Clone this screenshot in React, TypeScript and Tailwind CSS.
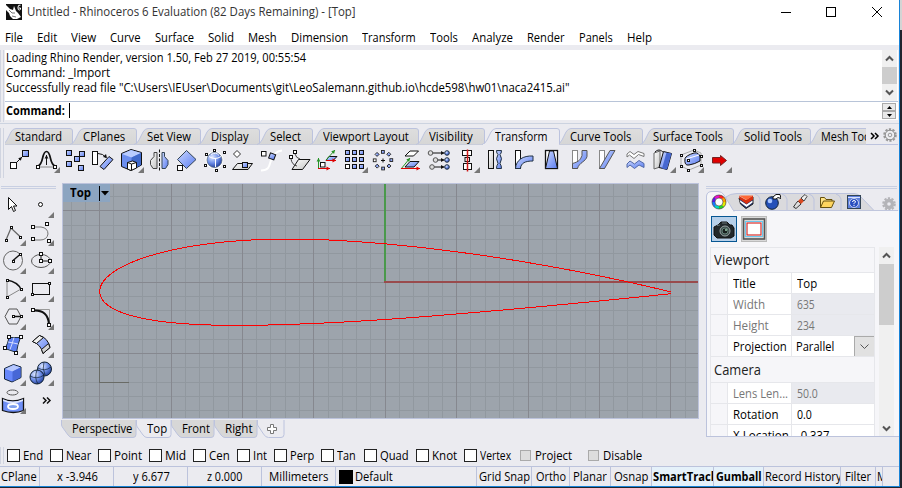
import React, { useLayoutEffect, useRef, useState } from "react";

/* Text set to a known advance width. */
function T({ w, children, className = "" }: { w: number; children: React.ReactNode; className?: string }) {
  const ref = useRef<HTMLSpanElement>(null);
  const [s, setS] = useState(1);
  useLayoutEffect(() => {
    if (ref.current) setS(w / ref.current.offsetWidth);
  }, [w]);
  return (
    <span className={`block shrink-0 whitespace-pre ${className}`} style={{ width: w }}>
      <span ref={ref} className="inline-block origin-left align-top" style={{ transform: `scaleX(${s})` }}>
        {children}
      </span>
    </span>
  );
}

const K = "#111";
const W = "#fff";
const B = "url(#blue)";
const G = "url(#metal)";

function Sq({ x, y, s = 5, f = B }: { x: number; y: number; s?: number; f?: string }) {
  return <rect x={x + 0.5} y={y + 0.5} width={s} height={s} fill={f} stroke={K} />;
}
function Dot({ x, y, s = 3 }: { x: number; y: number; s?: number }) {
  return <rect x={Math.round(x - s / 2) + 0.5} y={Math.round(y - s / 2) + 0.5} width={s - 1} height={s - 1} fill={W} stroke={K} />;
}
const Corner = ({ x = 21, y = 20 }: { x?: number; y?: number }) => (
  <path d={`M${x + 6} ${y}v6h-6z`} fill="#777" />
);
function Arrow({ x1, y1, x2, y2, c = K }: { x1: number; y1: number; x2: number; y2: number; c?: string }) {
  const a = Math.atan2(y2 - y1, x2 - x1);
  const p = (d: number) => `${x2 - 4 * Math.cos(a + d)},${y2 - 4 * Math.sin(a + d)}`;
  return (
    <g>
      <path d={`M${x1} ${y1}L${x2} ${y2}`} stroke={c} fill="none" />
      <polygon points={`${x2},${y2} ${p(0.5)} ${p(-0.5)}`} fill={c} />
    </g>
  );
}

function Defs() {
  return (
    <svg className="absolute h-0 w-0">
      <defs>
        <linearGradient id="blue" x1="0" y1="0" x2="1" y2="1">
          <stop offset="0" stopColor="#cbd8ff" /><stop offset="1" stopColor="#5a7cf0" />
        </linearGradient>
        <linearGradient id="metal" x1="0" y1="0" x2="1" y2="1">
          <stop offset="0" stopColor="#fff" /><stop offset="1" stopColor="#c4c4c4" />
        </linearGradient>
        <radialGradient id="ball" cx=".35" cy=".3" r=".8">
          <stop offset="0" stopColor="#e0e9ff" /><stop offset=".5" stopColor="#6f8fe8" /><stop offset="1" stopColor="#14308c" />
        </radialGradient>
        <linearGradient id="tab" x1="0" y1="0" x2="0" y2="1">
          <stop offset="0" stopColor="#dedede" /><stop offset="1" stopColor="#d6d6d6" />
        </linearGradient>
      </defs>
    </svg>
  );
}

const transformIcons: React.ReactNode[] = [
  <><Sq x={5} y={15} s={6} f={W} /><Sq x={17} y={3} s={6} /><Arrow x1={12} y1={15} x2={17} y2={10} /></>,
  <><path d="M5 19C11 17 8.500 4.500 13.500 4.500S16 17 22 19" stroke={K} strokeWidth="1.700" fill="none" /><path d="M7 20h14" stroke="#888" /><Arrow x1={13.5} y1={18} x2={13.5} y2={8} /><Dot x={5} y={20} s={4} /><Dot x={22} y={20} s={4} /><Corner /></>,
  <><Sq x={5} y={3} /><Sq x={18} y={4} /><Sq x={5} y={14} /><Sq x={17} y={18} /><Sq x={13} y={9} /></>,
  <><rect x="3.500" y="4.500" width="5" height="13" fill={W} stroke={K} /><path d="M9 6.500q5 0 8 4" stroke={K} fill="none" /><path d="M18 11l-4-1 3-3z" fill={K} /><path d="M11 19.500L20 9.500l4 3L15 22.500z" fill={B} stroke={K} /></>,
  <><path d="M4.500 6.500L14 2.500l10.500 3V18L14 23.500l-9.500-4z" fill="#6c8ff0" stroke={K} /><path d="M5 7l9-4 10 3-9.500 4.500z" fill="#b9ccff" /><path d="M14.500 10.500L24 6v12l-9.500 5z" fill="#416acb" /><path d="M10.500 15.500l5-1.500 4 1.500v5.500l-5.500 2.500-3.500-1.500z" fill={W} stroke={K} /><path d="M10.500 15.500l4 1.500 5-1.500M14.500 17v6" stroke={K} fill="none" /><Corner /></>,
  <><path d="M12 5.500H9v4l-3.500 4v4L8 21.500h4z" fill={G} stroke="#444" /><path d="M17 5.500h2.500v4l3.500 4v4L20.500 21.500H17z" fill={B} stroke="#345" /><path d="M14.500 2.500v22" stroke={K} strokeDasharray="3 1.500" /></>,
  <><path d="M13.500 3.500l9.500 9-9.500 9-9-9z" fill={B} stroke="#345" /><Sq x={4} y={18} s={5} f={W} /></>,
  <><circle cx="13.500" cy="13" r="9" fill="#fff" /><circle cx="13.500" cy="13" r="7.500" fill="url(#ball)" stroke="#567" strokeWidth=".7" /><path d="M8 9.500q6 4 12 0M14.500 11.500V20M10 7.500q5-3 8 1" stroke="#fff" fill="none" /><Dot x={5} y={7} /><Dot x={13} y={3} /><Dot x={23} y={5} /><Dot x={4} y={18} /><Dot x={15} y={23} /><Dot x={23} y={19} /></>,
  <><path d="M8 3.500l3.500 3.500L8 10.500 4.500 7z" fill={W} stroke="#333" /><path d="M8.500 16.500h15l-4.500 6H3.500z" fill={G} stroke={K} /><Sq x={13} y={15} s={5} /></>,
  <><path d="M4 23.500c10 0 8-7 11-13q3-6 10-7" stroke="#fff" strokeWidth="2" fill="none" /><Sq x={4} y={4} s={4.5} f={W} /><rect x="12.500" y="6.500" width="5.500" height="5.500" transform="rotate(20 15 9)" fill={B} stroke={K} /></>,
  <><path d="M13.500 12.500h11.500L17.500 22.500h-10.500z" fill={G} stroke={K} /><path d="M10 7q1 4 5 5M6 12q1 6 6 7" stroke="#444" fill="none" /><Dot x={9.5} y={5} s={4} /><Dot x={5.500} y={10} s={4} /></>,
  <><Arrow x1={5.500} y1={22} x2={5.500} y2={11} c="#279327" /><Arrow x1={5} y1={21.5} x2={17} y2={21.5} c="#d00" /><Sq x={7} y={15} s={4.500} f={W} /><path d="M16 9.500h8l-4 4h-7z" fill={B} stroke={K} /><Arrow x1={13} y1={13} x2={22} y2={3} c="#279327" /><Arrow x1={13} y1={13.5} x2={23} y2={13.5} c="#d00" /></>,
  <>{[0, 1, 2].map((r) => [0, 1, 2].map((c) => <Sq key={`${r}${c}`} x={4 + c * 7} y={3 + r * 7} s={4} f={r === 2 && c === 0 ? W : B} />))}<Corner /></>,
  <>{[0, 1, 2, 3, 4, 5, 6, 7].map((i) => <rect key={i} x="12.500" y="3.500" width="2.800" height="2.800" transform={`rotate(${i * 45} 14 13.200)`} fill={i === 6 ? W : B} stroke="#222" strokeWidth=".9" />)}<path d="M12 13.500h4M14 11.500v4" stroke={K} /></>,
  <><path d="M13 4h8.500L16.500 9H8z" fill={W} stroke={K} /><path d="M13 14.500h9L17 20H8z" fill={B} stroke={K} /><Arrow x1={4} y1={22} x2={13} y2={11} c="#279327" /><Arrow x1={4} y1={21.5} x2={23} y2={21.5} c="#d00" /></>,
  <>{[[5.5, 6], [10.5, 13], [7, 20]].map(([x, y]) => <g key={y}><Arrow x1={x} y1={y} x2={19.500} y2={y} /><circle cx={x} cy={y} r="2.300" fill="#ddd" stroke="#555" /><circle cx="22" cy={y} r="2.300" fill="url(#ball)" stroke="#234" /></g>)}</>,
  <><rect x="9.500" y="3.500" width="9" height="5" fill={W} stroke={K} /><rect x="12" y="10.500" width="4.500" height="4" fill={W} stroke={K} /><rect x="10.500" y="16.500" width="8" height="6" fill={W} stroke={K} /><path d="M14.500 2.500v22" stroke="#d01717" strokeWidth="1.500" /><Corner /></>,
  <><rect x="7.500" y="3.500" width="5" height="18" fill={G} stroke={K} /><path d="M15.500 3.500h5q0 3-1.500 4 3 4 0 9 1.500 2 1.500 5h-5q0-3 1.500-5-3-5 0-9-1.500-1-1.500-4z" fill={B} stroke="#234" /></>,
  <><rect x="6.500" y="3.500" width="5" height="18" fill={W} stroke={K} /><path d="M6.500 21.500C7 13 14 8.500 24 9v5c-8 0-12 2-12.500 7.500z" fill={B} stroke="#234" /></>,
  <><rect x="8.500" y="3.500" width="12" height="18" fill={W} stroke={K} strokeWidth="1.300" /><path d="M12.500 4h4l4 17.500h-12z" fill={B} stroke={K} /></>,
  <><rect x="7.500" y="3.500" width="5" height="18" fill={W} stroke="#888" /><path d="M7.500 21.500v-5c7-2 8-4 9.500-8V3.500h5v6c-1 5-8 6-9.500 12z" fill={B} stroke="#555" /></>,
  <><rect x="6.500" y="3.500" width="5" height="18" fill={W} stroke="#888" /><path d="M6.500 21.500L17 3.500h5l-10.500 18z" fill={B} stroke="#555" /></>,
  <><path d="M6 7l3-2.500 4 3L17 4.500l6 2v3l-5.500-2-4.500 4-4.500-3.500L6 10z" fill={W} stroke="#777" /><path d="M6 17l3-3 4.500 3 4.500-3.500 5 3v4l-5-2.500-4.500 3.500-4.500-3.500L6 20.500z" fill={B} stroke="#5068a8" /></>,
  <><path d="M5 6l6-2v16l-6 2z" fill={G} stroke="#666" /><path d="M6 5c4-4 7-1 9 1" stroke={K} fill="none" /><path d="M14.500 4.500l8 2-4.500 16-8-2z" fill={B} stroke={K} /><path d="M17.500 5.500l-4.500 16 5 1 4.500-16z" fill="#4768d0" /><Corner /></>,
  <><path d="M4 8l13-5 7 3v12l-12 5-8-4z" stroke="#aaa" fill="none" /><path d="M8 11.500Q9 8.500 17 6q5-1 6 4v4q-5 3-11 4-5 1-4-6.500z" fill={B} stroke={K} /><path d="M9 12l13-4" stroke="#fff" /><Dot x={4} y={8} /><Dot x={17.5} y={3} /><Dot x={24} y={9} /><Dot x={11} y={13} /><Dot x={4} y={19} /><Dot x={11} y={23} /><Dot x={24} y={18} /><Corner /></>,
  <><path d="M7.500 10.500h8V8.500l6 5-6 5v-2.500h-8z" fill="#e00000" stroke="#722" /><Corner /></>,
];

const paletteIcons: React.ReactNode[] = [
  <path d="M8.500 7.500v12l3-3 2 5 2-1-2-4.500h3.500z" fill={W} stroke={K} />,
  <><circle cx="12.500" cy="14.500" r="2" fill={W} stroke={K} /><Corner x={20} y={22} /></>,
  <><path d="M6 22L11 10l9.500 9" stroke="#666" fill="none" strokeWidth="1.300" /><Dot x={6} y={22.500} /><Dot x={11} y={9} /><Dot x={20.500} y={19.500} /><Corner x={20} y={22} /></>,
  <><path d="M5 9h8q7 1 7 7-1 6-8 6H5" stroke="#777" fill="none" /><Dot x={5} y={9} s={4} /><Dot x={19} y={6} s={4} /><Dot x={5} y={21} s={4} /><Dot x={21} y={23} s={4} /><Corner x={20} y={22} /></>,
  <><circle cx="13" cy="14.500" r="9.500" stroke="#666" fill="none" /><path d="M13 14.500l7-6" stroke={K} strokeWidth="1.400" /><Dot x={13} y={15} /><Dot x={20} y={8} /><Corner x={20} y={22} /></>,
  <><ellipse cx="13" cy="15" rx="9.500" ry="6.500" stroke="#555" fill="none" /><path d="M13 8v7h9" stroke={K} fill="none" /><Dot x={13} y={15} s={4} /><Dot x={13} y={8} s={4} /><Dot x={22} y={15} s={4} /><Corner x={20} y={22} /></>,
  <><path d="M7 6q11 2 14 9.500" stroke={K} strokeWidth="1.500" fill="none" /><path d="M7 6v17l14-8" stroke="#888" fill="none" /><Dot x={7} y={6.500} /><Dot x={21} y={15} /><Dot x={7} y={23.500} /><Corner x={20} y={22} /></>,
  <><rect x="4.500" y="9.500" width="17" height="11" fill="none" stroke={K} /><Dot x={4.500} y={20.500} /><Dot x={21.500} y={9.500} /><Corner x={20} y={22} /></>,
  <><path d="M5 14.500l4-7.500h8l4 7.500-4 7.500H9z" stroke="#555" fill="none" /><path d="M13 14.500h8" stroke={K} strokeWidth="1.500" /><Dot x={13} y={14.500} /><Dot x={21} y={14.500} /><Corner x={20} y={22} /></>,
  <><path d="M6 7.500h15.500V23" stroke="#999" fill="none" /><path d="M5 8.500q15-1 16 14" stroke={K} strokeWidth="2" fill="none" /><Dot x={5} y={8} s={4} /><Dot x={21} y={23} s={4} /><Corner x={20} y={22} /></>,
  <><path d="M9 7.500h11.500q-3 7-4 15L5 18.500q3-5 4-11z" fill="#5d7ff0" stroke="#234" /><path d="M8 12q6 1 10 2M14 7.500q-2 7-4 12" stroke="#d4ddff" fill="none" /><Dot x={9} y={7} s={4} /><Dot x={20.5} y={7} s={4} /><Dot x={5} y={18} s={4} /><Dot x={16} y={23} s={4} /><Corner x={20} y={22} /></>,
  <><path d="M4.500 11.500l7-6Q20 8 22 17.500l-7 6q-2-9-10.500-12z" fill={B} stroke={K} /><path d="M4.500 11.500l7-6 4 2-7 6zM13.500 19.500l7-6 1.500 4-7 6z" fill={G} stroke={K} /><Corner x={20} y={22} /></>,
  <><path d="M4.500 10.500l9-4 7.500 2.500v10.500L12 24l-7.500-3z" fill="#6687fa" stroke="#123" /><path d="M5 11l8.500-4 7 2.500-8 4z" fill="#b6c8ff" /><path d="M12.500 13.500l8-4v10l-8 4z" fill="#4767d6" /><Corner x={20} y={22} /></>,
  <><circle cx="16.500" cy="11" r="7" fill="url(#ball)" stroke="#123" /><circle cx="9" cy="19" r="7" fill="url(#ball)" stroke="#123" /><path d="M2 18q7 4 14-1M9 12q-3 8 1 14M10 10q7 4 13-1M16 4q-2 6 1 13" stroke="#123" strokeWidth=".7" fill="none" /><Corner x={20} y={22} /></>,
  <><ellipse cx="12.500" cy="6.500" rx="5.500" ry="2.500" fill="none" stroke="#555" /><path d="M2.500 12.500q10 5 21 0v12q-10 4-21 0z" fill="#6f8ff6" stroke={K} strokeWidth="1.300" /><path d="M3 13.300q10 4.500 20 0v1.700q-10 4.500-20 0z" fill="#dfe6ff" /><ellipse cx="13" cy="20.500" rx="5" ry="2.500" fill="#80a0ee" stroke="#fff" strokeWidth="1.800" /><Corner x={20} y={22} /></>,
  <path d="M15 11.500l3 3-3 3M19 11.500l3 3-3 3" stroke={K} strokeWidth="1.500" fill="none" />,
];

const menu: [string, number][] = [["File", 18], ["Edit", 20], ["View", 25], ["Curve", 31], ["Surface", 39], ["Solid", 26], ["Mesh", 29], ["Dimension", 57], ["Transform", 54], ["Tools", 28], ["Analyze", 41], ["Render", 38], ["Panels", 34], ["Help", 25]];

/* label, tab width, text width */
const tabs: [string, number, number][] = [["Standard", 68, 47], ["CPlanes", 64, 42], ["Set View", 64, 44], ["Display", 59, 38], ["Select", 53, 31], ["Viewport Layout", 106, 86], ["Visibility", 66, 44], ["Transform", 75, 53], ["Curve Tools", 83, 61], ["Surface Tools", 91, 70], ["Solid Tools", 77, 58], ["Mesh Tools", 80, 58]];

function ToolTab({ label, w, tw, active }: { label: string; w: number; tw: number; active: boolean }) {
  return (
    <div className={`relative h-[17px] shrink-0 pl-[10px] ${active ? "z-10" : ""}`} style={{ width: w }}>
      <svg className="absolute left-0 top-0 overflow-visible" width={w} height="17">
        <path d={`M-3 16.500Q0 16 2 12L6 4Q8 .5 11 .5H${w - 3}Q${w - .5} .5 ${w - .5} 3V16.500`} fill={active ? "#ebebf0" : "url(#tab)"} stroke="#bcc3de" />
        {active && <path d={`M-2 16.500H${w - 1}`} stroke="#ebebf0" />}
      </svg>
      <T w={tw} className="relative leading-[17px]">{label}</T>
    </div>
  );
}

function Chevron({ up = false }: { up?: boolean }) {
  return (
    <svg width="9" height="7" className={up ? "" : "rotate-180"}>
      <path d="M1 5.500l3.500-3.500L8 5.500" fill="none" stroke="#555" strokeWidth="2" />
    </svg>
  );
}

function Gear({ fill }: { fill: string }) {
  const solid = fill === "#b4b4b8";
  return (
    <svg width="14" height="14" viewBox="0 0 14 14">
      <circle cx="7" cy="7" r="5.800" fill="none" stroke={solid ? fill : "#999"} strokeWidth="2" strokeDasharray="2.200 1.444" />
      <circle cx="7" cy="7" r="4.800" fill={fill} stroke={solid ? fill : "#888"} />
      <circle cx="7" cy="7" r="1.800" fill="#ebebf0" stroke={solid ? "none" : "#999"} />
    </svg>
  );
}

function foilPath() {
  const c = 571, x0 = 99.8, y0 = 292.8;
  const at = (t: number, side: number) => {
    const th = 0.75 * (0.2969 * Math.sqrt(t) - 0.126 * t - 0.3516 * t * t + 0.2843 * t ** 3 - 0.1015 * t ** 4);
    const lo = t < 0.4;
    const k = lo ? 0.125 : 0.02 / 0.36;
    const cam = lo ? k * (0.8 * t - t * t) : k * (0.2 + 0.8 * t - t * t);
    const a = Math.atan(k * (0.8 - 2 * t));
    return `${(x0 + c * (t - side * th * Math.sin(a))).toFixed(2)} ${(y0 - c * (cam + side * th * Math.cos(a))).toFixed(2)}`;
  };
  const pts: string[] = [];
  for (let i = 80; i >= 0; i--) pts.push(at((i / 80) ** 2, 1));
  for (let i = 1; i <= 80; i++) pts.push(at((i / 80) ** 2, -1));
  return `M${pts.join("L")}`;
}

function Viewport() {
  const v: [number, boolean][] = [], h: [number, boolean][] = [];
  for (let k = -22; k <= 21; k++) v.push([Math.floor(385.2 + 14.28 * k), k % 5 === 0]);
  for (let k = -6; k <= 9; k++) h.push([Math.floor(282.3 + 14.28 * k), k % 5 === 0]);
  const pick = (major: boolean) =>
    v.filter((l) => l[1] === major).map((l) => `M${l[0] + 0.5} 184V418`).join("") +
    h.filter((l) => l[1] === major).map((l) => `M63 ${l[0] + 0.5}H698`).join("");
  return (
    <div className="relative h-[236px] w-[637px] shrink-0 border border-[#bcc3dc] bg-[#9da4ac]">
      <svg width="635" height="234" viewBox="63 184 635 234" shapeRendering="crispEdges" className="block">
        <path d={pick(false)} stroke="#91989f" />
        <path d={pick(true)} stroke="#86888f" />
        <path d="M99.500 352V382.500H129" stroke="#696b66" fill="none" />
        <path d="M384 282H698" stroke="#994b4d" strokeWidth="2" />
        <path d="M385 184V281" stroke="#4a994b" strokeWidth="2" />
        <path d={foilPath()} stroke="#f00" fill="none" />
      </svg>
      <div className="absolute left-0 top-0 flex h-[18px] w-[47px] items-center bg-[#8ca5c1] pl-[7px] font-bold">
        <T w={21} className="leading-[18px]">Top</T>
        <div className="ml-2 h-[15px] w-px bg-black" />
        <svg width="8" height="5" className="ml-px"><path d="M0 0h8L4 4.500z" fill="#000" /></svg>
      </div>
    </div>
  );
}

const viewTabs: [string, number, number, boolean][] = [["Perspective", 75, 60, false], ["Top", 35, 20, true], ["Front", 43, 28, false], ["Right", 43, 28, false]];

const snaps: [string, number, number][] = [["End", 20, 7], ["Near", 25, 7], ["Point", 28, 7], ["Mid", 21, 7], ["Cen", 21, 7], ["Int", 14, 7], ["Perp", 24, 7], ["Tan", 19, 8], ["Quad", 29, 7], ["Knot", 25, 7], ["Vertex", 31, 9]];

/* label, cell width, left padding, text width, highlighted */
const status: [string, number, number, number, boolean][] = [["CPlane", 40, 1, 36, false], ["x -3.946", 74, 17, 41, false], ["y 6.677", 74, 19, 37, false], ["z 0.000", 74, 19, 35, false], ["Millimeters", 74, 7, 59, false], ["Default", 141, 3, 38, false], ["Grid Snap", 55, 2, 51, false], ["Ortho", 38, 4, 30, false], ["Planar", 41, 3, 34, false], ["Osnap", 41, 3, 34, false], ["SmartTrack", 62, 1, 65, true], ["Gumball", 50, 2, 46, true], ["Record History", 77, 1, 76, false], ["Filter", 35, 4, 26, false], ["Memory", 7, 1, 42, false]];

function PropRow({ k, kw, v, vw, off = false, drop = false }: { k: string; kw: number; v: string; vw: number; off?: boolean; drop?: boolean }) {
  return (
    <div className={`flex h-[21px] shrink-0 border-t border-[#e6e7eb] ${off ? "text-[#777]" : "text-black"}`}>
      <div className="w-[17px] shrink-0 border-r border-[#e6e7eb]" />
      <div className="flex w-[64px] shrink-0 items-center border-r border-[#e6e7eb] bg-white pl-[5px]"><T w={kw}>{k}</T></div>
      <div className={`flex grow items-center ${drop ? "pl-[4px]" : "pl-[5px]"} ${off ? "bg-[#e9eaef]" : "bg-white"}`}>
        <T w={vw}>{v}</T>
        {drop && (
          <div className="ml-auto flex h-[20px] w-[20px] items-center justify-center border-l border-t border-[#aaa] bg-[#e1e1e1]">
            <svg width="9" height="6"><path d="M.5 .5l4 4 4-4" fill="none" stroke="#555" /></svg>
          </div>
        )}
      </div>
    </div>
  );
}

const wheel = ["#ff2020", "#ff9d00", "#e8e800", "#28d428", "#00d8c0", "#1878ff", "#5818e8", "#e810c8"];
const panelIcons: React.ReactNode[] = [
  <g>{wheel.map((c, i) => <path key={c} d="M8 2.500A5.500 5.500 0 0 1 12.200 4.400" transform={`rotate(${i * 45} 8 8)`} stroke={c} strokeWidth="3" fill="none" />)}<circle cx="8" cy="8" r="7" fill="none" stroke="#333" strokeWidth=".6" /><circle cx="8" cy="8" r="4" fill="#fff" stroke="#333" strokeWidth=".6" /></g>,
  <g><path d="M1 4l8 4 6-5v7l-7 4.500L2.500 10z" fill="#20326e" stroke="#222" /><path d="M1.500 6l7 4.500 6-4v2l-6 4.500-6-4.500z" fill="#fff" /><path d="M1 2l7 4 7-4.500v4L8.500 10 1.500 5z" fill="#d83010" /><path d="M1 1.500h14L8.500 6z" fill="#ff6a38" /></g>,
  <g><circle cx="7" cy="9" r="6.300" fill="#2450b8" stroke="#123" /><circle cx="5" cy="7" r="2.300" fill="#a9c6ff" /><path d="M8 3l3-2.500h4l1 4-3-1-2 1.500H8z" fill={W} stroke={K} /></g>,
  <g><path d="M1.500 13Q4 9 6 7l3 3-5 4.500z" fill="#ddd" stroke="#333" /><path d="M6 7l3-3 3 3-3 3z" fill="#d94a22" /><path d="M9 4l4-3.500 2 2L12 7z" fill="#eee" stroke="#444" /></g>,
  <g><path d="M1.500 13.500v-10h4l1.500 2h6v2" fill="#ffe486" stroke="#66510e" /><path d="M1.500 13.500l3-6.500h11l-3 6.500z" fill="#ffd65e" stroke="#66510e" /></g>,
  <g><rect x="1.500" y="1.500" width="13" height="13" fill="#5d7fdc" stroke="#345" /><path d="M2 3.500h12" stroke="#d8e2ff" /><circle cx="8" cy="9" r="4.500" fill="#2a4fc0" stroke="#fff" strokeWidth=".7" /><path d="M6.500 8q0-1.500 1.500-1.500T9.500 8L8 9.500v.7M8 11v1" stroke="#fff" fill="none" /></g>,
];

function Properties() {
  return (
    <div className="flex w-[193px] shrink-0 flex-col">
      <div className="mt-[3px] h-[3px] w-[191px] border-y border-[#c8cfe2]" />
      <div className="flex h-[22px] items-end pt-[2px]">
        <div className="relative flex h-[20px] w-[165px]">
          <svg className="absolute left-0 top-0 overflow-visible" width="192" height="21">
            <path d="M20 20V6Q24 2.500 31 2.500H148Q152 2.500 155 6L168 19.500" fill="#dadadd" stroke="#bcc3de" />
            {[54, 81, 108, 135].map((x) => <path key={x} d={`M${x - 5} 3q4 1 5 5V19`} stroke="#bcc3de" fill="none" />)}
            <path d="M0 19.500H192" stroke="#c0c6dd" />
            <path d="M.5 21V5Q1 .5 6 .5H12Q16 .5 18 4L28 20.500" fill="#f6f6f8" stroke="#bcc3de" />
            <path d="M1 20H27" stroke="#f6f6f8" strokeWidth="2" />
          </svg>
          {panelIcons.map((icon, i) => (
            <div key={i} className="relative flex w-[27px] shrink-0 items-center pl-[5px] pt-px"><svg width="16" height="16">{icon}</svg></div>
          ))}
        </div>
        <div className="ml-[11px]"><Gear fill="#b4b4b8" /></div>
      </div>
      <div className="flex h-[226px] flex-col border-b border-l border-[#bcc3dc] bg-[#f6f6f9]">
        <div className="flex h-[34px] shrink-0 gap-1 pl-1 pt-[5px]">
          <div className="flex h-[26px] w-[26px] items-center justify-center border border-[#075793] bg-[#b7d0e9]">
            <svg width="22" height="20" viewBox="0 0 22 20"><path d="M1 8l2-1 2-1 3-3h6l3 3h2l2 3v8l-3 2H4l-3-3z" fill="#22282b" stroke="#111" /><path d="M4 6.500l3-.5M9 4h5" stroke="#68777b" /><circle cx="12" cy="12" r="5" fill="#3c4b49" stroke="#98a5a5" /><circle cx="12" cy="12" r="3" fill="#19201f" stroke="#66847b" /><circle cx="13" cy="11" r="1" fill="#9fd0b2" /></svg>
          </div>
          <div className="flex h-[26px] w-[26px] items-center justify-center border border-[#bbb] bg-[#d9d9d9]">
            <svg width="24" height="24"><rect x="1.500" y="2" width="21" height="20" fill="#d8d8d8" stroke="#555" strokeWidth="1.600" /><rect x="3.500" y="4.500" width="17" height="15" fill="#fff" stroke="#6bc9ef" /><rect x="5" y="6" width="14" height="12" fill="#fff" stroke="#d72f2c" strokeWidth="1.200" /></svg>
          </div>
        </div>
        <div className="flex h-[191px] pl-[3px] pt-[2px]">
          <div className="flex h-[189px] w-[165px] flex-col overflow-hidden border-x border-t border-[#e6e7eb]">
            <div className="flex h-[24px] shrink-0 items-center pb-px pl-[3px] text-[14px] text-[#222]"><T w={55}>Viewport</T></div>
            <PropRow k="Title" kw={23} v="Top" vw={20} />
            <PropRow k="Width" kw={32} v="635" vw={18} off />
            <PropRow k="Height" kw={36} v="234" vw={18} off />
            <PropRow k="Projection" kw={54} v="Parallel" vw={38} drop />
            <div className="flex h-[26px] shrink-0 items-center border-t border-[#e6e7eb] pl-[3px] text-[14px] text-[#222]"><T w={47}>Camera</T></div>
            <PropRow k="Lens Len..." kw={55} v="50.0" vw={21} off />
            <PropRow k="Rotation" kw={45} v="0.0" vw={15} />
            <PropRow k="X Location" kw={56} v="-0.337" vw={32} />
          </div>
          <div className="ml-1 flex w-[15px] flex-col items-center bg-[#f0f0f0]">
            <div className="flex h-[17px] items-center"><Chevron up /></div>
            <div className="h-[61px] w-[15px] bg-[#cdcdcd]" />
            <div className="mt-auto flex h-[16px] items-center"><Chevron /></div>
          </div>
        </div>
      </div>
    </div>
  );
}

export default function App() {
  return (
    <div className="flex h-[488px] w-[902px] overflow-hidden bg-[#20242d] font-['Open_Sans','Noto_Sans',sans-serif] text-[12px] leading-[15px] text-black">
      <Defs />
      <div className="flex h-[487px] w-[900px] shrink-0 flex-col overflow-hidden border-b border-r border-[#1883d7] bg-[#ebebf0]">
        <header className="flex h-[25px] shrink-0 items-center bg-white pb-[2px] pl-[6px]">
          <svg width="16" height="16" viewBox="0 0 16 16" className="shrink-0">
            <rect width="16" height="16" fill="#111" />
            <path d="M0 1l4 4 3 1 1-4 2 5 2 2 3 4-2 1-2 1-4 0-3-3-1-3-3-3z" fill="#fff" />
            <path d="M3 6l3 3 3 0M6 12l4 1" stroke="#777" fill="none" />
            <path d="M14.500 1.200q-2.500-.7-2.500 2v1q0 2 1.500 1.800T14.500 4h-2" stroke="#fff" fill="none" />
          </svg>
          <T w={329} className="ml-[5px] text-[#333]">Untitled - Rhinoceros 6 Evaluation (82 Days Remaining) - [Top]</T>
          <svg width="112" height="12" className="ml-auto mr-[7px]" shapeRendering="crispEdges">
            <path d="M1 6.500h10" stroke="#000" /><rect x="46.500" y="1.500" width="9" height="9" fill="none" stroke="#000" />
            <path d="M92 1l10 10M102 1l-10 10" stroke="#000" shapeRendering="auto" />
          </svg>
        </header>
        <nav className="flex h-[20px] shrink-0 items-center gap-[14px] bg-white pl-[5px] pt-[4px]">
          {menu.map(([m, w]) => <T key={m} w={w}>{m}</T>)}
        </nav>

        <section className="flex h-[79px] shrink-0 border-b border-[#ccd3e0] pt-[5px]">
          <div className="mr-px h-[72px] w-[4px] border-x border-[#d0d4e0]" />
          <div className="flex h-[70px] w-[893px] flex-col bg-white">
            <div className="flex h-[51px]">
              <div className="flex grow flex-col pl-px">
                <T w={300}>Loading Rhino Render, version 1.50, Feb 27 2019, 00:55:54</T>
                <T w={104}>Command: _Import</T>
                <T w={563}>{'Successfully read file "C:\\Users\\IEUser\\Documents\\git\\LeoSalemann.github.io\\hcde598\\hw01\\naca2415.ai"'}</T>
              </div>
              <div className="mr-px flex w-[15px] flex-col items-center bg-[#f0f0f0]">
                <div className="flex h-[17px] items-center"><Chevron up /></div>
                <div className="h-[17px] w-[15px] bg-[#cdcdcd]" />
                <div className="flex h-[17px] items-center"><Chevron /></div>
              </div>
            </div>
            <div className="flex h-[19px] items-center border-t border-[#b8c4d8] pl-px font-bold">
              <T w={59} className="mb-[2px]">Command:</T>
              <div className="ml-1 mb-[2px] h-[15px] w-px bg-black" />
              <div className="ml-auto mr-[2px] flex flex-col bg-[#e9e9e9]">
                {[true, false].map((u) => (
                  <div key={String(u)} className="flex h-[8px] w-[14px] items-center justify-center border border-[#aaa]">
                    <svg width="5" height="3" className={u ? "" : "rotate-180"}><path d="M0 3h5L2.500 0z" /></svg>
                  </div>
                ))}
              </div>
            </div>
          </div>
        </section>

        <section className="flex h-[56px] shrink-0 pt-[4px]">
          <div className="mr-px h-[50px] w-[4px] border-x border-[#d0d4e0]" />
          <div className="w-[893px]">
            <div className="flex h-[17px] border-b border-[#bcc3de]">
              <div className="flex h-[17px] w-[861px] overflow-hidden">
                {tabs.map(([l, w, tw]) => <ToolTab key={l} label={l} w={w} tw={tw} active={l === "Transform"} />)}
              </div>
              <svg width="10" height="8" className="ml-[4px] mt-[4px]"><path d="M1 1l3 3-3 3M5 1l3 3-3 3" stroke="#000" strokeWidth="1.500" fill="none" /></svg>
              <div className="ml-[3px]"><Gear fill="#ededf0" /></div>
            </div>
            <div className="flex pt-[2px]">
              {transformIcons.map((icon, i) => <svg key={i} width="28" height="27" className="shrink-0">{icon}</svg>)}
            </div>
          </div>
        </section>

        <main className="flex h-[263px] shrink-0 pt-[3px]">
          <div className="flex w-[62px] shrink-0 flex-col">
            <div className="ml-px mt-[3px] h-[3px] w-[55px] border-y border-[#c8cfe2]" />
            <div className="mt-px grid w-[56px] grid-cols-2">
              {paletteIcons.map((icon, i) => <svg key={i} width="28" height="28">{icon}</svg>)}
            </div>
          </div>
          <div className="mr-[7px] flex w-[637px] shrink-0 flex-col">
            <Viewport />
            <div className="flex h-[20px]">
              {viewTabs.map(([l, w, tw, a]) => (
                <div key={l} className="relative flex h-[20px] shrink-0 justify-end pr-[5px]" style={{ width: w }}>
                  <svg className="absolute left-0 top-0 overflow-visible" width={w} height="20">
                    <path d={`M-.5 1V6Q0 8 1 9l5 7q2 2.500 4 2.500H${w - 4}q3 0 3-3V1`} fill={a ? "#ebebf0" : "#d7d7d7"} stroke="#bcc3de" />
                  </svg>
                  <T w={tw} className="relative leading-[20px]">{l}</T>
                </div>
              ))}
              <svg width="28" height="20" className="overflow-visible">
                <path d="M-.5 1V6l6 9q2 3.500 5 3.500H23q3 0 3-3V1" fill="#ebebf0" stroke="#bcc3de" />
                <path d="M12.500 5.500h3v3h3v3h-3v3h-3v-3h-3v-3h3z" fill="#fff" stroke="#777" />
              </svg>
            </div>
          </div>
          <Properties />
        </main>

        <section className="flex h-[23px] shrink-0 items-center pt-[2px]">
          <div className="mr-[3px] h-[17px] w-[4px] border-x border-[#d0d4e0]" />
          {snaps.map(([l, w, gap]) => (
            <div key={l} className="flex items-center">
              <div className="mr-[3px] h-[13px] w-[13px] border border-[#222] bg-white" />
              <T w={w}>{l}</T>
              <div className="shrink-0" style={{ width: gap }} />
            </div>
          ))}
          <div className="h-[11px] w-[11px] shrink-0 border border-[#aaa] bg-[#ddd]" />
          <T w={37} className="ml-[4px]">Project</T>
          <div className="ml-[16px] h-[11px] w-[11px] shrink-0 border border-[#aaa] bg-[#ddd]" />
          <T w={39} className="ml-[4px]">Disable</T>
        </section>
        <footer className="flex h-[20px] shrink-0 border-t border-[#bcc3dc]">
          {status.map(([l, w, pad, tw, hi]) => (
            <div key={l} className={`flex shrink-0 items-center overflow-hidden border-r border-[#bcc3dc] ${hi ? "bg-[#e5f1fa] font-bold" : ""}`} style={{ width: w, paddingLeft: pad }}>
              {l === "Default" && <div className="mr-[2px] h-[14px] w-[14px] bg-black" />}
              <T w={tw}>{l}</T>
            </div>
          ))}
        </footer>
      </div>
      <div className="flex w-[2px] flex-col">
        <div className="h-[30px] bg-[#d4d4d4]" />
      </div>
    </div>
  );
}
